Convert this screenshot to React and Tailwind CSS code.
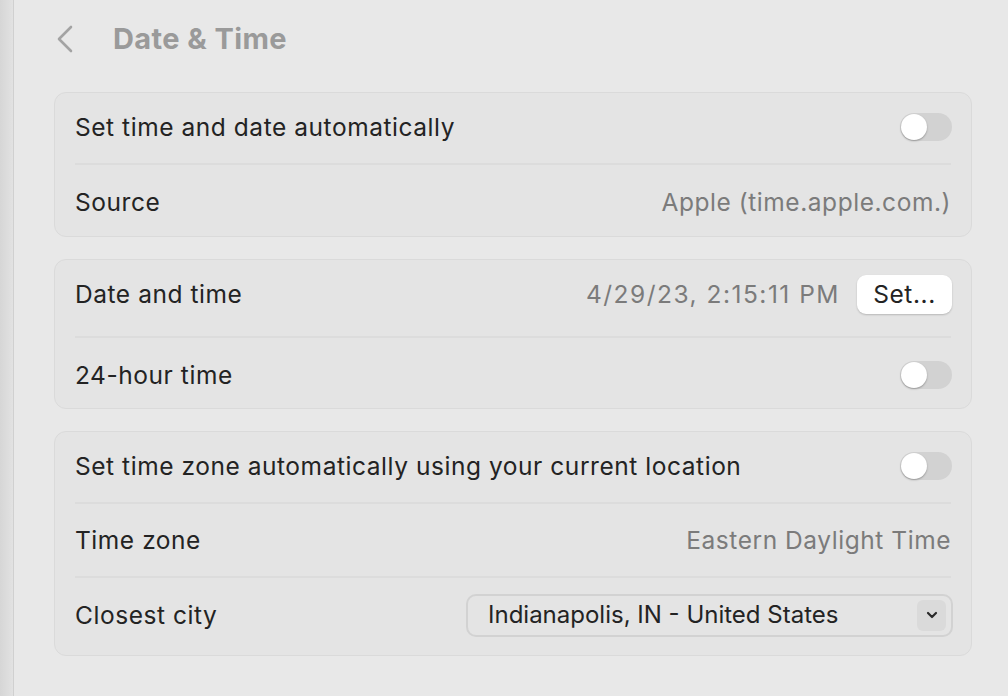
import React, { useState } from 'react';

const font = { fontFamily: 'Inter, "Noto Sans", sans-serif' };

function Toggle({ on, onChange }) {
  return (
    <button
      onClick={() => onChange(!on)}
      className={`relative w-[52px] h-[28px] mr-[-1px] rounded-full shrink-0 ${on ? 'bg-[#3b82f6]' : 'bg-[#d2d2d2]'}`}
    >
      <span
        className={`absolute top-[1px] w-[26px] h-[26px] rounded-full bg-white shadow-[0_1px_2px_rgba(0,0,0,0.3)] ${on ? 'left-[25px]' : 'left-[1px]'}`}
      />
    </button>
  );
}

function Row({ label, children, h, last }) {
  return (
    <div className="px-5">
      <div className={`flex items-center justify-between ${h} ${last ? '' : 'border-b-2 border-[#dcdcdc]'}`}>
        <span className="text-[24.5px] tracking-[0.55px] text-[#232323]">{label}</span>
        {children}
      </div>
    </div>
  );
}

function Card({ children, className = '' }) {
  return <div className={`rounded-[12px] bg-[#e4e4e4] border border-[#dadada] ${className}`}>{children}</div>;
}

const valueCls = 'text-[24.5px] tracking-[0.55px] text-[#7b7b7b]';

export default function App() {
  const [autoTime, setAutoTime] = useState(false);
  const [hour24, setHour24] = useState(false);
  const [autoZone, setAutoZone] = useState(false);

  return (
    <div className="flex w-[1008px] h-[696px] bg-[#e8e8e8] overflow-hidden" style={font}>
      <div className="w-[14px] shrink-0 bg-gradient-to-r from-[#d6d6d6] to-[#e2e2e2] border-r border-[#d0d0d0]" />
      <div className="flex-1 pl-[40px] pr-[36px]">
        <div className="flex items-center h-[80px] pb-[2px]">
          <svg width="20" height="28" viewBox="0 0 20 28" className="ml-[1px]">
            <path d="M16 2 L4 14 L16 26" fill="none" stroke="#a3a3a3" strokeWidth="2.6" strokeLinecap="round" strokeLinejoin="round" />
          </svg>
          <h1 className="ml-[38px] text-[29px] font-bold text-[#9a9a9a] tracking-[0.4px]">Date &amp; Time</h1>
        </div>

        <div className="flex flex-col mt-[12px]">
          <Card>
            <Row label="Set time and date automatically" h="h-[72px] pb-[2px]">
              <Toggle on={autoTime} onChange={setAutoTime} />
            </Row>
            <Row label="Source" h="h-[71px] pt-[3px]" last>
              <span className={valueCls}>Apple (time.apple.com.)</span>
            </Row>
          </Card>

          <Card className="mt-[22px]">
            <Row label="Date and time" h="h-[78px] pb-[8px]">
              <div className="flex items-center gap-[17px]">
                <span className="text-[24.5px] tracking-[1.5px] text-[#7b7b7b]">4/29/23, 2:15:11 PM</span>
                <button className="h-[39px] w-[95px] mr-[-1px] rounded-[9px] bg-white text-[24.5px] tracking-[0.55px] text-[#232323] shadow-[0_1px_2px_rgba(0,0,0,0.2)]">
                  Set...
                </button>
              </div>
            </Row>
            <Row label="24-hour time" h="h-[70px] pt-[4px]" last>
              <Toggle on={hour24} onChange={setHour24} />
            </Row>
          </Card>

          <Card className="mt-[22px]">
            <Row label="Set time zone automatically using your current location" h="h-[72px] pb-[2px]">
              <Toggle on={autoZone} onChange={setAutoZone} />
            </Row>
            <Row label="Time zone" h="h-[74px]">
              <span className={valueCls}>Eastern Daylight Time</span>
            </Row>
            <Row label="Closest city" h="h-[77px] pb-[3px]" last>
              <div className="flex items-center justify-between w-[487px] h-[43px] mr-[-2px] rounded-[10px] border-2 border-[#d2d2d2] pl-[20px] pr-[5px]">
                <span className="text-[24px] text-[#232323]">Indianapolis, IN - United States</span>
                <span className="flex items-center justify-center w-[29px] h-[31px] rounded-[6px] bg-[#dadada]">
                  <svg width="12" height="8" viewBox="0 0 12 8">
                    <path d="M2 2 L6 6 L10 2" fill="none" stroke="#2a2a2a" strokeWidth="2.2" strokeLinecap="round" strokeLinejoin="round" />
                  </svg>
                </span>
              </div>
            </Row>
          </Card>
        </div>
      </div>
    </div>
  );
}
